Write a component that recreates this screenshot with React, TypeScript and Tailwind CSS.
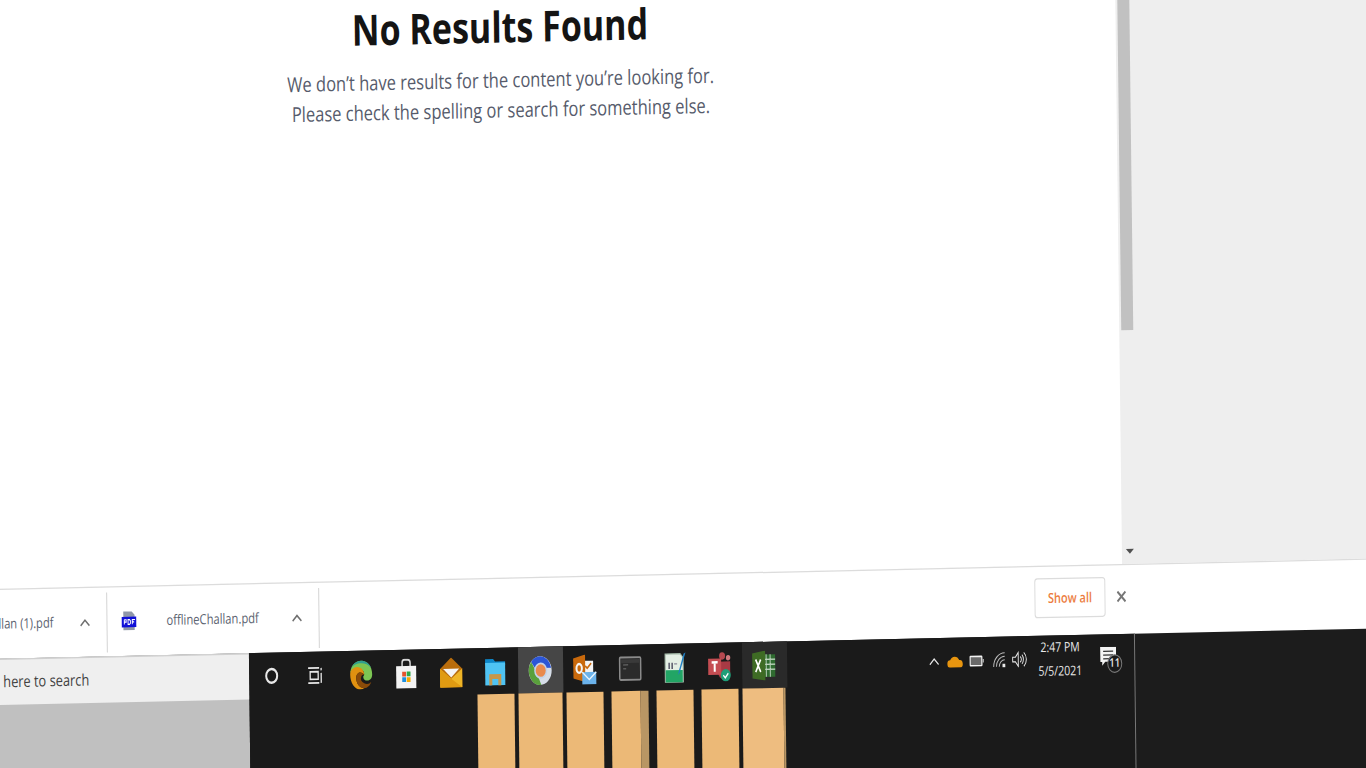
import React from 'react';

const EdgeIcon = () => (
  <svg viewBox="0 0 24 24" className="w-[24px] h-[24px]">
    <path d="M1 12C1 5 6 1 12 1c6 0 11 4 11 11 0 3-2 5-5 5-2 0-4-1-4-3 0-1 1-1 1-2 0-3-3-5-6-5-4 0-8 2-8 5z" fill="#7cc653" />
    <path d="M12 1c4 0 8 2 10 6-3-3-6-4-10-4-4 0-8 1-10 4 2-4 6-6 10-6z" fill="#2f9e8f" />
    <path d="M1 12c0-4 4-6 7-6 4 0 7 3 7 6-3-3-8-2-8 3 0 4 3 8 8 8-1 0-2 1-4 1C5 24 1 18 1 12z" fill="#e09110" />
    <path d="M7 15c0 4 3 8 8 8 3 0 6-2 7-5-2 2-5 2-7 1-3-1-4-3-3-5 0-1 1-2 3-2-3-3-8-2-8 3z" fill="#8a4b08" />
  </svg>
);

const StoreIcon = () => (
  <svg viewBox="0 0 24 24" className="w-[24px] h-[24px]">
    <path d="M8 8V3.500C8 2 9 1 10.500 1h3C15 1 16 2 16 3.500V8" fill="none" stroke="#d6d6d6" strokeWidth="1.500" />
    <rect x="2" y="6" width="20" height="18" fill="#f3f3f3" />
    <rect x="8" y="10.500" width="3.800" height="3.800" fill="#e5532d" />
    <rect x="12.500" y="10.500" width="3.800" height="3.800" fill="#2ea84a" />
    <rect x="8" y="15" width="3.800" height="3.800" fill="#1d8fe0" />
    <rect x="12.500" y="15" width="3.800" height="3.800" fill="#f5a800" />
  </svg>
);

const MailIcon = () => (
  <svg viewBox="0 0 24 24" className="w-[24px] h-[24px]">
    <path d="M1 9L12 0l11 9v15H1z" fill="#b96d0c" />
    <path d="M4 9h16l-8 7z" fill="#f4f4f4" />
    <path d="M1 9l11 8 11-8v15H1z" fill="#efb526" />
    <path d="M1 24V9l11 8 11 7z" fill="#e09b12" />
  </svg>
);

const FolderIcon = () => (
  <svg viewBox="0 0 24 24" className="w-[24px] h-[24px]">
    <path d="M2 2h8l2 2h10v3H2z" fill="#0d87c9" />
    <rect x="2" y="5" width="20" height="18" fill="#4fc3f3" />
    <path d="M6 14h12v9h-3v-5H9v5H6z" fill="#c8974a" />
  </svg>
);

const ChromeIcon = () => (
  <svg viewBox="0 0 24 24" className="w-[24px] h-[24px]">
    <circle cx="12" cy="12" r="11.500" fill="#d6dde8" />
    <path d="M12 .5A11.500 11.500 0 0 1 23 10H12a4 4 0 0 0-3.500 2L3 5A11.500 11.500 0 0 1 12 .5z" fill="#2c56d6" />
    <path d="M3 5l5.500 8.500L13 23.500A11.500 11.500 0 0 1 3 5z" fill="#5aa03c" />
    <circle cx="12.500" cy="12" r="6.500" fill="#c3d3ea" />
    <circle cx="12.500" cy="12" r="5" fill="#e98a4e" />
  </svg>
);

const OutlookIcon = () => (
  <svg viewBox="0 0 24 24" className="w-[24px] h-[24px]">
    <rect x="10" y="5" width="10" height="10" fill="#f4f4f4" />
    <path d="M12 9l2 2 4-4" fill="none" stroke="#c9690c" strokeWidth="1.500" />
    <path d="M0 3l12-3v22L0 19z" fill="#c9690c" />
    <ellipse cx="6" cy="11" rx="2.700" ry="3.500" fill="none" stroke="#f4f4f4" strokeWidth="2" />
    <rect x="9" y="14" width="14" height="10" fill="#6bb2ea" />
    <path d="M9 14l7 6 7-6" fill="none" stroke="#eaf4fc" strokeWidth="1.200" />
  </svg>
);

const TerminalIcon = () => (
  <svg viewBox="0 0 24 24" className="w-[24px] h-[24px]">
    <rect x="1.500" y="3" width="21" height="18" rx="1" fill="#2b2b2b" stroke="#8a8a8a" strokeWidth="1.500" />
    <rect x="3" y="4.500" width="18" height="3" fill="#3a3a3a" />
    <path d="M5 9h5M5 12h3" stroke="#5a5a5a" strokeWidth="1.200" />
  </svg>
);

const SheetIcon = () => (
  <svg viewBox="0 0 24 24" className="w-[24px] h-[24px]">
    <path d="M2 1h15l3 3v21H2z" fill="#e4efe4" stroke="#9fb5a4" strokeWidth="1" />
    <path d="M2.500 14h17v10h-17z" fill="#22a565" />
    <path d="M6 8v5M9 8v5" stroke="#556" strokeWidth="1.500" />
    <path d="M11 9h3" stroke="#889" strokeWidth="1" />
    <path d="M22.500 0l-6 16-1.500 2 .5-3 5-14z" fill="#1f7fc4" />
  </svg>
);

const TeamsIcon = () => (
  <svg viewBox="0 0 24 24" className="w-[24px] h-[24px]">
    <circle cx="15" cy="3.500" r="3" fill="#b5484f" />
    <circle cx="21" cy="5" r="2.200" fill="#d07a7e" />
    <path d="M11 8h12v9a5 5 0 0 1-5 5h-2a5 5 0 0 1-5-5z" fill="#a83a44" />
    <rect x="1" y="5.500" width="13" height="13" fill="#c44d52" />
    <path d="M4.500 8.500h6M7.500 8.500v7.500" stroke="#fff" strokeWidth="2" />
    <circle cx="18.500" cy="19" r="5" fill="#1f9e78" />
    <path d="M16 19l2 2 3-3.500" fill="none" stroke="#fff" strokeWidth="1.300" />
  </svg>
);

const ExcelIcon = () => (
  <svg viewBox="0 0 24 24" className="w-[24px] h-[24px]">
    <rect x="12" y="3" width="11" height="18" fill="#2f6b30" />
    <path d="M14 3v18M18 3v18M12 7h11M12 11h11M12 15h11" stroke="#c9dcc9" strokeWidth=".9" />
    <path d="M0 2l13-2v24L0 22z" fill="#3e6b24" />
    <path d="M3.500 7l5 10M8.500 7l-5 10" stroke="#fff" strokeWidth="1.600" />
  </svg>
);

const TaskSlot = ({ active, children }: { active?: string; children: React.ReactNode }) => (
  <div className={`w-[44.8px] h-full flex items-center justify-center shrink-0 ${active || ''}`}>{children}</div>
);

const PdfIcon = () => (
  <svg viewBox="0 0 16 16" className="w-[15px] h-[16px] shrink-0 mb-[2px]">
    <path d="M2 0h9l3 3v13H2z" fill="#8f97a8" />
    <rect x="0" y="4.500" width="16" height="9" fill="#1010d8" />
    <path d="M3 7v4M3 7h2v2H3M7 7v4h1.500l1-1V8l-1-1zM11.500 11V7h3M11.500 9h2" fill="none" stroke="#fff" strokeWidth="1" />
  </svg>
);

const Chevron = () => (
  <svg viewBox="0 0 12 8" className="w-[11px] h-[7px] shrink-0">
    <path d="M1 7l5-5 5 5" fill="none" stroke="#6f6f6f" strokeWidth="1.600" />
  </svg>
);

const App: React.FC = () => {
  const font = { fontFamily: '"Open Sans", sans-serif' };
  const tan = 'h-[100px] shrink-0 bg-[#ecb977]';

  return (
    <div className="w-[1366px] h-[768px] overflow-hidden bg-white" style={font}>
      {/* the whole shot is a skewed, vertically stretched photo of the screen */}
      <div className="w-[1400px] h-[650px] flex flex-col origin-top-left [transform:matrix(1,-0.022,0.015,1.25,-11,0)]">
        <div className="h-[471px] shrink-0 flex bg-[#eeeeee]">
          <div className="w-[1126px] shrink-0 bg-white">
            <div className="w-[1021px] pt-[6px] text-center">
              <h1 className="text-[34px] leading-[48px] font-bold text-[#141414]">No Results Found</h1>
              <p className="text-[16.500px] leading-[24px] mt-[7px] text-[#565b6b]">We don’t have results for the content you’re looking for.</p>
              <p className="text-[16.500px] leading-[24px] text-[#565b6b]">Please check the spelling or search for something else.</p>
            </div>
          </div>
          <div className="w-[16px] shrink-0 flex flex-col pl-[2px]">
            <div className="w-[12px] h-[284px] bg-[#c1c1c1]" />
            <div className="flex-1 flex items-end pb-[8px] pl-[2px]">
              <div className="w-0 h-0 border-x-[4px] border-x-transparent border-t-[4px] border-t-[#505050]" />
            </div>
          </div>
        </div>

        <div className="h-[56px] shrink-0 flex items-center bg-white border-t border-[#dcdcdc]">
          <div className="w-[111px] h-[48px] shrink-0 flex items-center justify-end border-r border-[#d4d4d4]">
            <span className="shrink-0 whitespace-nowrap text-[11.200px] text-[#5b6270]">offlineChallan (1).pdf</span>
            <div className="ml-[26px] mr-[16px]">
              <Chevron />
            </div>
          </div>
          <div className="w-[212px] h-[48px] shrink-0 flex items-center border-r border-[#d4d4d4] pl-[14px]">
            <PdfIcon />
            <span className="ml-[30px] whitespace-nowrap text-[11.200px] text-[#5b6270]">offlineChallan.pdf</span>
            <div className="ml-auto mr-[16px]">
              <Chevron />
            </div>
          </div>
          <button className="ml-[715px] mb-[5px] w-[71px] h-[32px] shrink-0 rounded-[3px] border border-[#dcdcdc] bg-white text-[11px] font-semibold text-[#ec7d3f]">
            Show all
          </button>
          <svg viewBox="0 0 10 10" className="ml-[11px] mb-[5px] w-[10px] h-[10px] shrink-0">
            <path d="M1 1l8 8M9 1l-8 8" stroke="#777" strokeWidth="1.800" />
          </svg>
        </div>

        <div className="flex-1 flex bg-[#1c1c1c]">
          <div className="w-[252px] shrink-0 flex flex-col bg-[#c0c0c0]">
            <div className="h-[37px] flex items-center justify-end pr-[160px] bg-[#efefef] border-t border-[#cfcfcf]">
              <span className="whitespace-nowrap text-[12.800px] text-[#3f3f3f]">Type here to search</span>
            </div>
          </div>

          <div className="w-[886px] shrink-0 flex flex-col bg-[#1a1a1a] border-r border-[#777]">
            <div className="h-[37px] shrink-0 flex items-center">
              <TaskSlot>
                <div className="w-[13px] h-[13px] rounded-full border-2 border-[#e8e8e8]" />
              </TaskSlot>
              <TaskSlot>
                <svg viewBox="0 0 16 16" className="w-[16px] h-[16px] mr-[2px]">
                  <path d="M1 2h11M1 14h11M3 5h8v6H3zM14 2v2M14 6v8" fill="none" stroke="#e8e8e8" strokeWidth="1.300" />
                </svg>
              </TaskSlot>
              <TaskSlot><EdgeIcon /></TaskSlot>
              <TaskSlot><StoreIcon /></TaskSlot>
              <TaskSlot><MailIcon /></TaskSlot>
              <TaskSlot><FolderIcon /></TaskSlot>
              <TaskSlot active="bg-[#464646]"><ChromeIcon /></TaskSlot>
              <TaskSlot><OutlookIcon /></TaskSlot>
              <TaskSlot><TerminalIcon /></TaskSlot>
              <TaskSlot><SheetIcon /></TaskSlot>
              <TaskSlot><TeamsIcon /></TaskSlot>
              <TaskSlot active="bg-[#2a2a2a]"><ExcelIcon /></TaskSlot>

              <div className="ml-auto flex items-center">
                <svg viewBox="0 0 12 8" className="w-[12px] h-[7px]">
                  <path d="M1 7l5-5 5 5" fill="none" stroke="#e8e8e8" strokeWidth="1.300" />
                </svg>
                <svg viewBox="0 0 16 10" className="ml-[7px] w-[16px] h-[10px]">
                  <path d="M3 10a3 3 0 0 1 0-6 5 5 0 0 1 9 0 3 3 0 0 1 1 6z" fill="#e8950f" />
                </svg>
                <svg viewBox="0 0 16 10" className="ml-[6px] w-[15px] h-[10px]">
                  <rect x="1" y="1" width="12.500" height="8" rx=".5" fill="#6a6a6a" stroke="#f4f4f4" strokeWidth="1.300" />
                  <path d="M15 3.500v3" stroke="#aaa" strokeWidth="1.500" />
                </svg>
                <svg viewBox="0 0 14 14" className="ml-[8px] w-[14px] h-[13px]">
                  <path d="M1 13a12 12 0 0 1 12-12M4 13a9 9 0 0 1 9-9M7 13a6 6 0 0 1 6-6" fill="none" stroke="#bdbdbd" strokeWidth="1" />
                  <rect x="10.500" y="10.500" width="3" height="3" fill="#e8e8e8" />
                </svg>
                <svg viewBox="0 0 16 14" className="ml-[5px] w-[16px] h-[13px]">
                  <path d="M1 5h3l3-4v12l-3-4H1z" fill="none" stroke="#e8e8e8" strokeWidth="1" />
                  <path d="M9 4.500a3 3 0 0 1 0 5M11 3a6 6 0 0 1 0 8M13 1a8 8 0 0 1 0 12" fill="none" stroke="#e8e8e8" strokeWidth="1" />
                </svg>
                <div className="ml-[10px] w-[46px] flex flex-col items-center text-[10.500px] leading-[19px] text-[#e8e8e8]">
                  <span className="whitespace-nowrap">2:47 PM</span>
                  <span className="whitespace-nowrap">5/5/2021</span>
                </div>
                <div className="relative ml-[17px] mr-[18px] w-[16px] h-[18px]">
                  <svg viewBox="0 0 16 16" className="w-[16px] h-[16px]">
                    <path d="M0 0h16v12H5l-3 3v-3H0z" fill="#f4f4f4" />
                    <path d="M3 3.500h10M3 6.500h10M3 9.500h7" stroke="#333" strokeWidth="1" />
                  </svg>
                  <div className="absolute left-[7px] top-[6px] w-[15px] h-[15px] rounded-full bg-[#1a1a1a] border border-[#777] flex items-center justify-center text-[9.500px] font-semibold text-[#e8e8e8]">
                    11
                  </div>
                </div>
              </div>
            </div>
            <div className="flex pl-[228px]">
              <div className={`${tan} w-[37px]`} />
              <div className={`${tan} w-[44px] ml-[4px]`} />
              <div className={`${tan} w-[37px] ml-[4px]`} />
              <div className={`${tan} w-[29px] ml-[8px]`} />
              <div className="h-[100px] w-[8px] shrink-0 bg-[#b99664]" />
              <div className={`${tan} w-[37px] ml-[8px]`} />
              <div className={`${tan} w-[37px] ml-[8px]`} />
              <div className={`${tan} w-[41px] ml-[4px] bg-[#eebd80]`} />
              <div className="h-[100px] w-[2px] shrink-0 bg-[#b99664]" />
            </div>
          </div>
        </div>
      </div>
    </div>
  );
};

export default App;
